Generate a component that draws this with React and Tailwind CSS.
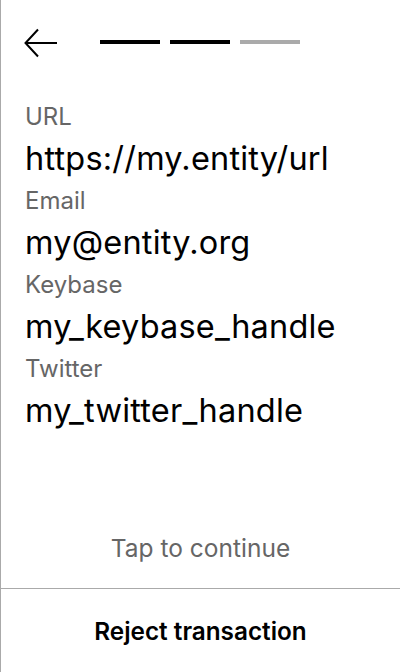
import React from "react";

const fields = [
  { label: "URL", value: "https://my.entity/url" },
  { label: "Email", value: "my@entity.org" },
  { label: "Keybase", value: "my_keybase_handle" },
  { label: "Twitter", value: "my_twitter_handle" },
];

export default function App() {
  return (
    <div
      className="w-[400px] h-[672px] bg-white border-l border-[#aaaaaa] flex flex-col text-black"
      style={{ fontFamily: "Inter, 'Noto Sans', sans-serif" }}
    >
      <div className="h-[101px] shrink-0 flex items-start pl-[23px]">
        <svg width="34" height="30" viewBox="0 0 34 30" className="mt-[28px]" fill="none">
          <path d="M1.5 15 H33" stroke="#000" strokeWidth="2" />
          <path d="M14 1.5 L1.5 15 L14 28.5" stroke="#000" strokeWidth="2" />
        </svg>
        <div className="flex gap-[10px] mt-[40px] ml-[42px]">
          <div className="w-[60px] h-[4px] bg-black" />
          <div className="w-[60px] h-[4px] bg-black" />
          <div className="w-[60px] h-[4px] bg-[#aaaaaa]" />
        </div>
      </div>
      <div className="flex-1 flex flex-col pl-6">
        {fields.map((f) => (
          <div key={f.label} className="flex flex-col">
            <div className="text-[24px] leading-[32px] text-[#666666]">{f.label}</div>
            <div className="text-[32.5px] leading-[52px] tracking-[0.2px]">{f.value}</div>
          </div>
        ))}
      </div>
      <div className="text-center text-[24.5px] leading-[24px] text-[#666666] mb-[28px]">
        Tap to continue
      </div>
      <div className="h-[84px] shrink-0 border-t border-[#aaaaaa] flex items-center justify-center">
        <span className="text-[24.3px] font-semibold pt-[1px]">Reject transaction</span>
      </div>
    </div>
  );
}
